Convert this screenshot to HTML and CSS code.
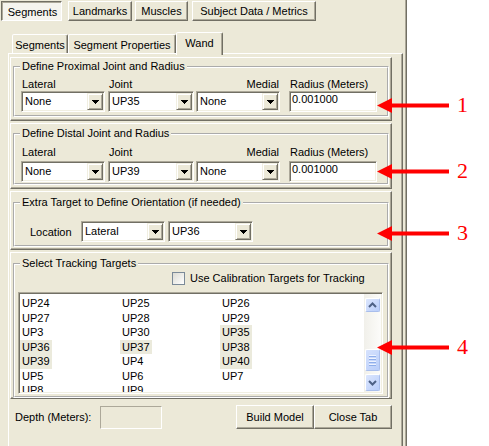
FILE: index.html
```html
<!DOCTYPE html>
<html>
<head>
<meta charset="utf-8">
<title>Wand</title>
<link rel="stylesheet" href="styles.css">
</head>
<body>
<div class="screen">
  <div class="app">
    <div class="toptabs">
      <div class="tbtn tbtn-on w1">Segments</div>
      <div class="tbtn w2">Landmarks</div>
      <div class="tbtn w3">Muscles</div>
      <div class="tbtn w4">Subject Data / Metrics</div>
    </div>
    <div class="tabctl">
      <div class="tabstrip">
        <div class="itab t1">Segments</div>
        <div class="itab t2">Segment Properties</div>
        <div class="itab itab-on t3">Wand</div>
      </div>
      <div class="tabpanel">
        <div class="panel p1">
          <fieldset class="group">
            <legend>Define Proximal Joint and Radius</legend>
            <div class="fields">
              <div class="col c1"><div class="lbl">Lateral</div><div class="combo"><span class="val">None</span><span class="ddbtn"><svg width="7" height="4" viewBox="0 0 7 4"><path d="M0 0h7v1h-1v1h-1v1h-1v1h-1v-1h-1v-1h-1v-1h-1z"/></svg></span></div></div>
              <div class="col c2"><div class="lbl">Joint</div><div class="combo"><span class="val">UP35</span><span class="ddbtn"><svg width="7" height="4" viewBox="0 0 7 4"><path d="M0 0h7v1h-1v1h-1v1h-1v1h-1v-1h-1v-1h-1v-1h-1z"/></svg></span></div></div>
              <div class="col c3"><div class="lbl lbl-r">Medial</div><div class="combo"><span class="val">None</span><span class="ddbtn"><svg width="7" height="4" viewBox="0 0 7 4"><path d="M0 0h7v1h-1v1h-1v1h-1v1h-1v-1h-1v-1h-1v-1h-1z"/></svg></span></div></div>
              <div class="col c4"><div class="lbl">Radius (Meters)</div><div class="tbox">0.001000</div></div>
            </div>
          </fieldset>
        </div>
        <div class="panel p2">
          <fieldset class="group">
            <legend>Define Distal Joint and Radius</legend>
            <div class="fields">
              <div class="col c1"><div class="lbl">Lateral</div><div class="combo"><span class="val">None</span><span class="ddbtn"><svg width="7" height="4" viewBox="0 0 7 4"><path d="M0 0h7v1h-1v1h-1v1h-1v1h-1v-1h-1v-1h-1v-1h-1z"/></svg></span></div></div>
              <div class="col c2"><div class="lbl">Joint</div><div class="combo"><span class="val">UP39</span><span class="ddbtn"><svg width="7" height="4" viewBox="0 0 7 4"><path d="M0 0h7v1h-1v1h-1v1h-1v1h-1v-1h-1v-1h-1v-1h-1z"/></svg></span></div></div>
              <div class="col c3"><div class="lbl lbl-r">Medial</div><div class="combo"><span class="val">None</span><span class="ddbtn"><svg width="7" height="4" viewBox="0 0 7 4"><path d="M0 0h7v1h-1v1h-1v1h-1v1h-1v-1h-1v-1h-1v-1h-1z"/></svg></span></div></div>
              <div class="col c4"><div class="lbl">Radius (Meters)</div><div class="tbox">0.001000</div></div>
            </div>
          </fieldset>
        </div>
        <div class="panel p3">
          <fieldset class="group">
            <legend>Extra Target to Define Orientation (if needed)</legend>
            <div class="locrow">
              <span class="loclbl">Location</span>
              <div class="combo cw1"><span class="val">Lateral</span><span class="ddbtn"><svg width="7" height="4" viewBox="0 0 7 4"><path d="M0 0h7v1h-1v1h-1v1h-1v1h-1v-1h-1v-1h-1v-1h-1z"/></svg></span></div>
              <div class="combo cw2"><span class="val">UP36</span><span class="ddbtn"><svg width="7" height="4" viewBox="0 0 7 4"><path d="M0 0h7v1h-1v1h-1v1h-1v1h-1v-1h-1v-1h-1v-1h-1z"/></svg></span></div>
            </div>
          </fieldset>
        </div>
        <div class="panel p4">
          <fieldset class="group">
            <legend>Select Tracking Targets</legend>
            <div class="chkrow"><span class="cb"></span><span>Use Calibration Targets for Tracking</span></div>
            <div class="list">
              <div class="items">
                <span class="it">UP24</span><span class="it">UP25</span><span class="it">UP26</span>
                <span class="it">UP27</span><span class="it">UP28</span><span class="it">UP29</span>
                <span class="it">UP3</span><span class="it">UP30</span><span class="it sel">UP35</span>
                <span class="it sel">UP36</span><span class="it sel">UP37</span><span class="it sel">UP38</span>
                <span class="it sel">UP39</span><span class="it">UP4</span><span class="it sel">UP40</span>
                <span class="it">UP5</span><span class="it">UP6</span><span class="it">UP7</span>
                <span class="it">UP8</span><span class="it">UP9</span>
              </div>
              <div class="vscroll">
                <div class="sbbtn sb-up"><svg width="9" height="6" viewBox="0 0 9 6"><path d="M1 5L4.5 1.5L8 5" fill="none" stroke="#4D6185" stroke-width="2"/></svg></div>
                <div class="thumb"><span></span><span></span><span></span><span></span></div>
                <div class="sbbtn sb-down"><svg width="9" height="6" viewBox="0 0 9 6"><path d="M1 1L4.5 4.5L8 1" fill="none" stroke="#4D6185" stroke-width="2"/></svg></div>
              </div>
            </div>
          </fieldset>
        </div>
        <div class="bottom">
          <span class="depthlbl">Depth (Meters):</span>
          <div class="dtbox"></div>
          <div class="btn btn-first">Build Model</div>
          <div class="btn">Close Tab</div>
        </div>
      </div>
    </div>
  </div>

  <div class="ann a1"><svg class="arrow" width="72" height="15" viewBox="0 0 72 15"><path d="M0 7.5L15 0V5.5H72V9.5H15V15Z" fill="#FF0000"/></svg><span class="num">1</span></div>
  <div class="ann a2"><svg class="arrow" width="72" height="15" viewBox="0 0 72 15"><path d="M0 7.5L15 0V5.5H72V9.5H15V15Z" fill="#FF0000"/></svg><span class="num">2</span></div>
  <div class="ann a3"><svg class="arrow" width="72" height="15" viewBox="0 0 72 15"><path d="M0 7.5L15 0V5.5H72V9.5H15V15Z" fill="#FF0000"/></svg><span class="num">3</span></div>
  <div class="ann a4"><svg class="arrow" width="72" height="15" viewBox="0 0 72 15"><path d="M0 7.5L15 0V5.5H72V9.5H15V15Z" fill="#FF0000"/></svg><span class="num">4</span></div>
</div>
</body>
</html>
```
FILE: styles.css
```css
* { box-sizing: border-box; }
html, body { margin: 0; padding: 0; }
body {
  font-family: "Liberation Sans", Arial, sans-serif;
  font-size: 11px;
  color: #000;
  background: #fff;
}
.screen {
  position: relative;
  width: 489px;
  height: 446px;
  overflow: hidden;
  background: #fff;
}
.app {
  width: 407px;
  height: 446px;
  background: #ECE9D8;
  border-right: 1px solid #716F64;
  box-shadow: inset -1px 0 #ACA899;
  padding-top: 1px;
}

/* top button-style tabs */
.toptabs { display: flex; height: 20px; padding-left: 1px; }
.tbtn {
  height: 20px;
  display: flex;
  align-items: center;
  justify-content: center;
  background: #ECE9D8;
  border: 1px solid;
  border-color: #fff #716F64 #716F64 #fff;
  box-shadow: inset -1px -1px #ACA899;
  white-space: nowrap;
}
.tbtn-on {
  border-color: #716F64 #fff #fff #716F64;
  box-shadow: inset 1px 1px #ACA899;
  background: #F5F4EE;
  padding: 1px 0 0 2px;
}
.w1 { width: 61px; }
.w2 { width: 64px; margin-left: 6px; }
.w3 { width: 53px; margin-left: 3px; }
.w4 { width: 124px; margin-left: 4px; }

/* inner tab control */
.tabctl { margin: 11px 0 0 8px; width: 395px; }
.tabstrip { height: 21px; display: flex; align-items: flex-end; padding-left: 4px; }
.itab {
  height: 19px;
  display: flex;
  align-items: center;
  justify-content: center;
  background: #ECE9D8;
  border: 1px solid;
  border-bottom: none;
  border-color: #fff #716F64 transparent #fff;
  box-shadow: inset -1px 0 #ACA899;
  border-radius: 2px 2px 0 0;
  white-space: nowrap;
  padding-top: 1px;
}
.itab-on {
  height: 23px;
  margin-bottom: -2px;
  position: relative;
  z-index: 1;
  padding: 0 0 3px 0;
}
.t1 { width: 56px; }
.t2 { width: 108px; }
.t3 { width: 47px; }
.tabpanel {
  height: 395px;
  border: 1px solid;
  border-color: #fff #716F64 #716F64 #fff;
  box-shadow: inset -1px 0 #ACA899;
  padding: 3px 10px 0 1px;
}

/* raised panels */
.panel {
  display: flex;
  flex-direction: column;
  border: 1px solid;
  border-color: #fff #716F64 #716F64 #fff;
  box-shadow: inset -1px -1px #ACA899;
  padding: 2px 2px 3px 2px;
}
.p1 { height: 64px; }
.p2 { height: 66px; margin-top: 2px; padding-top: 3px; }
.p3 { height: 59px; margin-top: 2px; padding-top: 4px; padding-bottom: 2px; }
.p4 { height: 147px; margin-top: 2px; padding-top: 4px; padding-bottom: 0; }

.group {
  margin: 0;
  flex: 1;
  min-width: 0;
  border: 2px groove #fff;
  padding: 5px 0 0 6px;
}
.group legend {
  padding: 0 2px;
  margin-left: -1px;
  line-height: 13px;
}
.p2 .group { padding-top: 6px; }
.p2 .lbl { margin-bottom: 2px; }

.fields { display: flex; }
.col { display: flex; flex-direction: column; }
.c1 { width: 84px; }
.c2 { width: 86px; margin-left: 3px; }
.c3 { width: 84px; margin-left: 2px; }
.c4 { width: 88px; margin-left: 9px; }
.lbl { line-height: 13px; padding-left: 1px; white-space: nowrap; }
.lbl-r { text-align: right; padding-right: 1px; }

.combo {
  height: 21px;
  display: flex;
  align-items: center;
  background: #fff;
  border: 1px solid;
  border-color: #ACA899 #fff #fff #ACA899;
  box-shadow: inset 1px 1px #716F64, inset -1px -1px #F1EFE2;
  padding: 1px;
}
.val { flex: 1; padding-left: 2px; line-height: 13px; white-space: nowrap; }
.ddbtn {
  width: 16px;
  height: 17px;
  display: flex;
  align-items: center;
  justify-content: center;
  background: #ECE9D8;
  border: 1px solid;
  border-color: #F1EFE2 #716F64 #716F64 #F1EFE2;
  box-shadow: inset 1px 1px #fff, inset -1px -1px #ACA899;
}
.ddbtn svg { display: block; fill: #000; margin-top: 1px; }
.tbox {
  height: 21px;
  background: #fff;
  border: 1px solid;
  border-color: #ACA899 #fff #fff #ACA899;
  box-shadow: inset 1px 1px #716F64, inset -1px -1px #F1EFE2;
  padding: 1px 0 0 2px;
  line-height: 13px;
}

/* orientation row */
.p3 .group { padding-top: 12px; }
.locrow { display: flex; align-items: center; padding-left: 9px; }
.loclbl { width: 51px; }
.cw1 { width: 84px; }
.cw2 { width: 85px; margin-left: 3px; }

/* tracking */
.p4 .group { padding-top: 0; }
.chkrow { display: flex; align-items: center; height: 14px; margin: 1px 0 0 151px; white-space: nowrap; }
.cb {
  width: 13px;
  height: 13px;
  border: 1px solid #7B8A98;
  background: linear-gradient(135deg, #DCDBD3, #FFFFFF);
  margin-right: 5px;
  flex: none;
}
.list {
  display: flex;
  width: 365px;
  height: 102px;
  margin: 7px 0 0 -3px;
  background: #fff;
  border: 1px solid;
  border-color: #ACA899 #fff #fff #ACA899;
  box-shadow: inset 1px 1px #716F64, inset -1px -1px #F1EFE2;
  padding: 1px;
}
.items {
  flex: 1;
  display: grid;
  grid-template-columns: repeat(3, 100px);
  grid-auto-rows: 14.5px;
  align-content: start;
  justify-items: start;
  padding-top: 2px;
  overflow: hidden;
}
.it { padding: 0 2px; line-height: 14.5px; height: 14.5px; white-space: nowrap; }
.it.sel { background: #EBEADC; }
.vscroll {
  width: 17px;
  display: flex;
  flex-direction: column;
  padding: 4px 1px 1px 1px;
  background: linear-gradient(90deg, #F1F0EA, #FCFCFA);
}
.sbbtn {
  display: flex;
  align-items: center;
  justify-content: center;
  border: 1px solid #fff;
  border-right-color: #A9BEEC;
  border-bottom-color: #A9BEEC;
  border-radius: 2px;
  background: linear-gradient(135deg, #DCE6FD, #B9CEFA);
}
.sbbtn svg { display: block; }
.sb-up { height: 14px; }
.sb-down { height: 17px; margin-top: auto; }
.thumb {
  height: 22px;
  margin-top: 37px;
  border: 1px solid #fff;
  border-right-color: #A9BEEC;
  border-bottom-color: #A9BEEC;
  border-radius: 2px;
  background: linear-gradient(135deg, #D6E2FD, #B9CEFA);
  display: flex;
  flex-direction: column;
  align-items: center;
  justify-content: center;
  gap: 1px;
}
.thumb span { display: block; width: 7px; height: 1px; background: #EEF3FE; box-shadow: 0 1px #8FAEEA; margin-bottom: 1px; }

/* bottom row */
.bottom {
  display: flex;
  align-items: center;
  height: 24px;
  margin-top: 6px;
  padding-left: 5px;
}
.depthlbl { width: 85px; white-space: nowrap; }
.dtbox {
  width: 62px;
  height: 23px;
  border: 1px solid;
  border-color: #ACA899 #fff #fff #ACA899;
  background: #ECE9D8;
}
.btn {
  width: 78px;
  height: 24px;
  display: flex;
  align-items: center;
  justify-content: center;
  background: #ECE9D8;
  border: 1px solid;
  border-color: #fff #716F64 #716F64 #fff;
  box-shadow: inset -1px -1px #ACA899;
  white-space: nowrap;
}
.btn-first { margin-left: auto; }

/* red annotations */
.ann {
  position: absolute;
  left: 377px;
  display: flex;
  align-items: center;
  height: 22px;
}
.arrow { display: block; }
.num {
  font-family: "Liberation Serif", "Times New Roman", serif;
  font-size: 22px;
  line-height: 22px;
  color: #FF0000;
  margin-left: 8px;
}
.a1 { top: 94px; }
.a2 { top: 160px; }
.a3 { top: 222px; }
.a4 { top: 336px; }
```
